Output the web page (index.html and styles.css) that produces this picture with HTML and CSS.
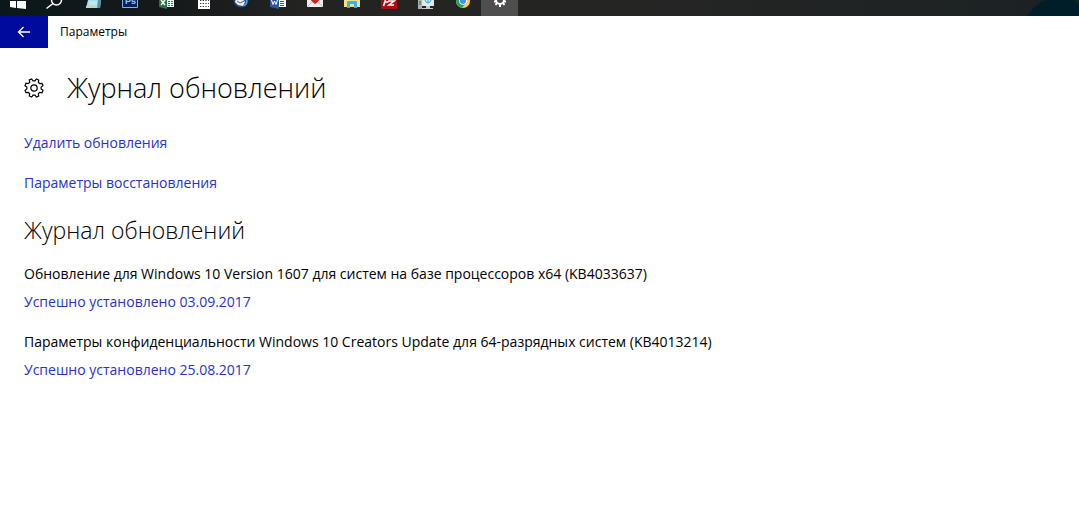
FILE: index.html
```html
<!DOCTYPE html>
<html lang="ru">
<head>
    <meta charset="UTF-8">
    <meta name="viewport" content="width=device-width, initial-scale=1.0">
    <title>Параметры</title>
    <link rel="stylesheet" href="styles.css">
</head>
<body>
    <nav class="taskbar" aria-label="Панель задач">
        <button class="task" aria-label="Пуск">
            <svg viewBox="0 0 37 16"><path d="M10 1h6v7l-6-1zM17 1h9v8l-9-1z" fill="#fff"/></svg>
        </button>
        <button class="task" aria-label="Поиск">
            <svg viewBox="0 0 37 16"><circle cx="19.5" cy="0" r="5" fill="none" stroke="#fff" stroke-width="1.5"/><path d="M16 3.5L9.500 8.500" stroke="#fff" stroke-width="1.5"/></svg>
        </button>
        <button class="task" aria-label="Блокнот">
            <svg viewBox="0 0 37 16"><path d="M14 0h13l-1 8H12z" fill="#a9dce6"/><path d="M24 0h3l-1 8h-3z" fill="#5d929d"/><path d="M12 6h3l9 2H12z" fill="#e6c99c"/><path d="M15 2h8M15 4h8" stroke="#d8f3f5"/></svg>
        </button>
        <button class="task" aria-label="Photoshop">
            <svg viewBox="0 0 37 16"><path d="M11.5 -6h15V7.5h-15z" fill="#061e5c" stroke="#70b5f5"/><text class="ps" x="14" y="4">Ps</text></svg>
        </button>
        <button class="task" aria-label="Excel">
            <svg viewBox="0 0 37 16"><path d="M18 0h8v7h-8z" fill="#f4fff7"/><path d="M20 1h2v1h-2zM23 1h2v1h-2zM20 3h2v1h-2zM23 3h2v1h-2zM20 5h2v1h-2zM23 5h2v1h-2z" fill="#207947"/><path d="M11 0h8v9l-8-2z" fill="#1d7947"/><path d="M13 0l4 5M17 0l-4 5" stroke="#fff" stroke-width="1.4"/></svg>
        </button>
        <button class="task" aria-label="Календарь">
            <svg viewBox="0 0 37 16"><path d="M13 0h12v9H13z" fill="#fff"/><path d="M15 .5h9M15 3.5h9M15 6.5h9" stroke="#333" stroke-dasharray="1.300 1.400"/></svg>
        </button>
        <button class="task" aria-label="Почта Thunderbird">
            <svg viewBox="0 0 37 16"><circle cx="19" cy="0" r="7.5" fill="#1d4a8c"/><path d="M14 -1h7l2 3-2 4-5-1-3-3z" fill="#eceef1"/><path d="M15 1l3 2 4-2" fill="none" stroke="#545c70"/><path d="M24.500 0q1 4-3 6" fill="none" stroke="#55a1df" stroke-width="1.5"/></svg>
        </button>
        <button class="task" aria-label="Word">
            <svg viewBox="0 0 37 16"><path d="M18 0h9v7h-9z" fill="#fff"/><path d="M21 1.500h4M21 3.500h4M21 5.500h4" stroke="#2859a6"/><path d="M11 0h9v9l-9-2z" fill="#2859a6"/><path d="M12.500 0l1.500 4.500L15.500 1 17 4.500 18.500 0" fill="none" stroke="#fff"/></svg>
        </button>
        <button class="task" aria-label="Почта">
            <svg viewBox="0 0 37 16"><path d="M11 0h16v7H11z" fill="#eeeef0"/><path d="M11 7l5-5M27 7l-5-5" stroke="#bcc0c5"/><path d="M15 0h8q0 1-4 4-4-3-4-4z" fill="#cf2421"/></svg>
        </button>
        <button class="task" aria-label="Проводник">
            <svg viewBox="0 0 37 16"><path d="M11 0h16v7H11z" fill="#fbdc83"/><path d="M14 8V2q0-1 1-1h8q1 0 1 1v6h-3V4h-4v4z" fill="#3dafe9"/></svg>
        </button>
        <button class="task" aria-label="FileZilla">
            <svg viewBox="0 0 37 16"><path d="M11 0h16v9H11z" fill="#b10b0b"/><path d="M15.500 0l-2 6M14.500 2h4M18 1h6l-5 4h5" fill="none" stroke="#fff" stroke-width="1.6"/></svg>
        </button>
        <button class="task" aria-label="Компьютер">
            <svg viewBox="0 0 37 16"><path d="M11 0h4v9h-4z" fill="#a9b1ae"/><path d="M12 2h2M12 4h2" stroke="#4d5b58"/><path d="M15 0h12v6H15z" fill="#e2e8e8"/><path d="M17 0h8v4h-8z" fill="#d5f0fa"/><path d="M18 0q1 3 3 3t3-3M21 3V0" fill="none" stroke="#2d9fd0"/><path d="M19 6h4v2h3v1H15V8h4z" fill="#c7cecd"/></svg>
        </button>
        <button class="task" aria-label="Chrome">
            <svg viewBox="0 0 37 16"><circle cx="19" cy="1" r="7" fill="#ffcd42"/><path d="M12 0q0 6 6 8l3-4-5-3-3-4z" fill="#1da362"/><path d="M12 0V-6h14v6z" fill="#dd5144"/><circle cx="19" cy="1" r="3.8" fill="#fff"/><circle cx="19" cy="1" r="3" fill="#4a8af4"/></svg>
        </button>
        <button class="task active" aria-label="Параметры">
            <svg viewBox="0 0 37 16"><circle cx="19" cy="0" r="4" fill="none" stroke="#fff" stroke-width="2"/><path d="M15 1.500h-2M23 1.500h2M16 3l-1.500 2M22 3l1.500 2M19 4.500V7" stroke="#fff" stroke-width="2"/></svg>
        </button>
    </nav>

    <header class="titlebar">
        <button class="back" aria-label="Назад">
            <svg viewBox="0 0 14 12"><path d="M13 6H1.500M6.500 1l-5 5 5 5" fill="none" stroke="#fff" stroke-width="1.3"/></svg>
        </button>
        <span class="app-name">Параметры</span>
    </header>

    <main class="content">
        <div class="page-title">
            <svg class="gear" viewBox="0 0 20 20">
                <path d="M8.200 3L8.700 .8 11.300 .8 11.800 3 13.700 3.800 15.600 2.600 17.400 4.400 16.200 6.300 17 8.200 19.200 8.700 19.200 11.300 17 11.800 16.200 13.700 17.400 15.600 15.600 17.400 13.700 16.200 11.800 17 11.300 19.200 8.700 19.200 8.200 17 6.300 16.200 4.400 17.400 2.600 15.600 3.800 13.700 3 11.800 .8 11.300 .8 8.700 3 8.200 3.800 6.300 2.600 4.400 4.400 2.600 6.300 3.800z" transform="rotate(22.500 10 10)"/>
                <circle cx="10" cy="10" r="3.2"/>
            </svg>
            <h1>Журнал обновлений</h1>
        </div>
        <div class="links">
            <a href="#">Удалить обновления</a>
            <a href="#">Параметры восстановления</a>
        </div>
        <h2>Журнал обновлений</h2>
        <ul class="updates">
            <li class="update">
                <span>Обновление для Windows 10 Version 1607 для систем на базе процессоров x64 (KB4033637)</span>
                <a href="#">Успешно установлено 03.09.2017</a>
            </li>
            <li class="update">
                <span>Параметры конфиденциальности Windows 10 Creators Update для 64-разрядных систем (KB4013214)</span>
                <a href="#">Успешно установлено 25.08.2017</a>
            </li>
        </ul>
    </main>
</body>
</html>
```
FILE: styles.css
```css
body {
    font-family: "Segoe UI", "Open Sans", "Noto Sans", sans-serif;
    font-size: 14px;
    line-height: 20px;
    margin: 0;
    background-color: #fff;
    color: #000;
}

button {
    border: none;
    padding: 0;
    cursor: pointer;
}

a {
    color: #2733c8;
    text-decoration: none;
}

/* Taskbar */
.taskbar {
    display: flex;
    height: 16px;
    overflow: hidden;
    background: radial-gradient(circle at calc(100% - 20px) 34px, #001e29 35px, transparent 38px),
        linear-gradient(to right, #0a181c, #15191a 15%, #232322 28%, #252524 60%, #1b2224);
}

.task {
    width: 37px;
    background: none;
}

.task.active {
    background-color: #4e4e4e;
}

.task svg {
    display: block;
    width: 37px;
    height: 16px;
}

.ps {
    font-size: 9px;
    font-weight: bold;
    fill: #8dcbff;
}

/* Title bar */
.titlebar {
    display: flex;
    align-items: center;
    gap: 12px;
    height: 32px;
}

.back {
    display: flex;
    align-items: center;
    justify-content: center;
    width: 48px;
    height: 32px;
    background-color: #000a9c;
}

.back svg {
    width: 14px;
    height: 12px;
}

.app-name {
    font-size: 12px;
}

/* Content */
.content {
    padding: 20px 24px;
}

.page-title {
    display: flex;
    align-items: center;
    gap: 23px;
}

.gear {
    width: 20px;
    height: 20px;
    fill: none;
    stroke: #000;
    stroke-width: 1.2;
}

h1,
h2 {
    margin: 0;
    font-weight: 300;
}

h1 {
    font-size: 27px;
    line-height: 40px;
}

h2 {
    margin-top: 19px;
    font-size: 23px;
    line-height: 36px;
}

.links {
    display: flex;
    flex-direction: column;
    align-items: flex-start;
    gap: 20px;
    margin-top: 25px;
}

.updates {
    display: flex;
    flex-direction: column;
    gap: 20px;
    margin: 16px 0 0;
    padding: 0;
    list-style: none;
}

.update {
    display: flex;
    flex-direction: column;
    align-items: flex-start;
    gap: 8px;
}
```
